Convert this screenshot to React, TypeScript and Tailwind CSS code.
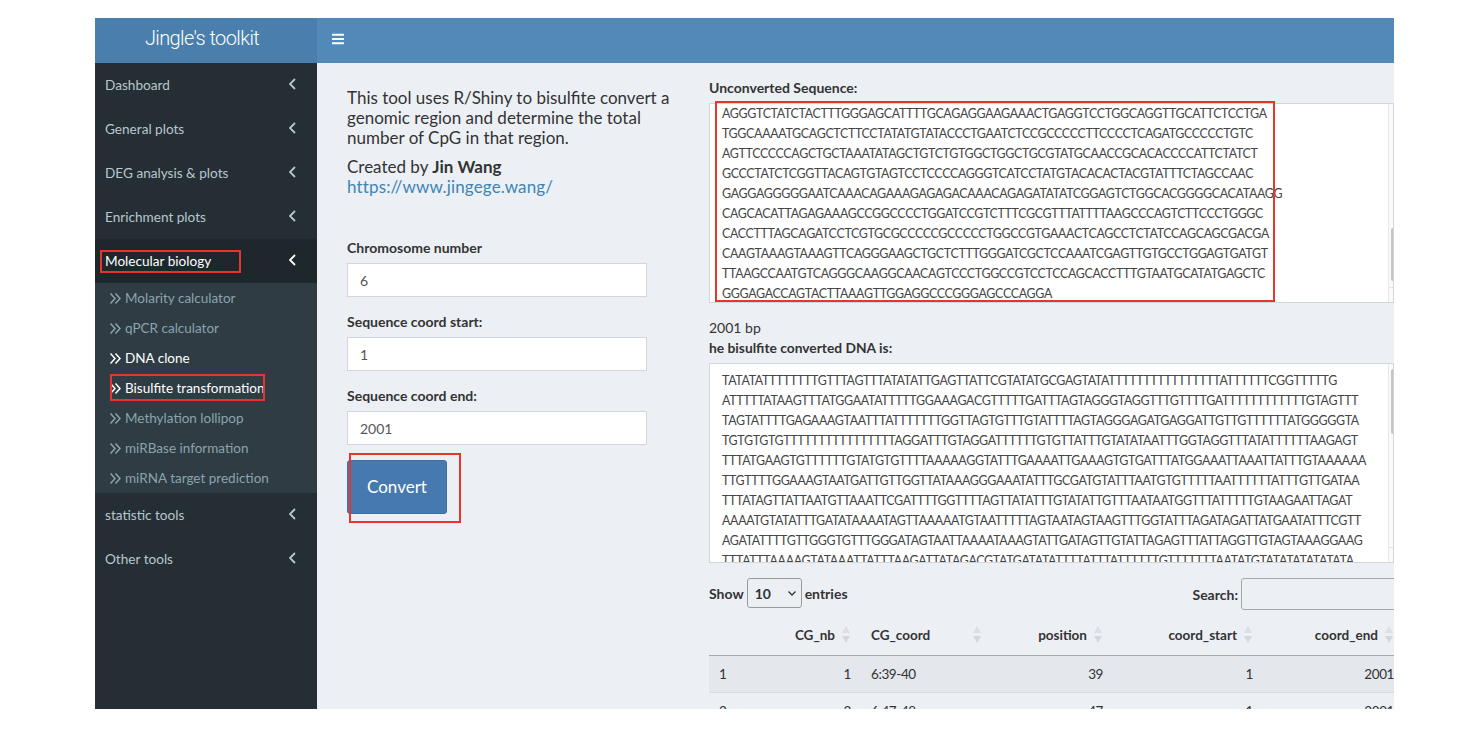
import { FaBars } from 'react-icons/fa';

const topMenu = ['Dashboard', 'General plots', 'DEG analysis & plots', 'Enrichment plots'];
const subMenu = [
  { label: 'Molarity calculator' },
  { label: 'qPCR calculator' },
  { label: 'DNA clone', bright: true },
  { label: 'Bisulfite transformation', bright: true },
  { label: 'Methylation lollipop' },
  { label: 'miRBase information' },
  { label: 'miRNA target prediction' },
];

const unconverted = [
  'AGGGTCTATCTACTTTGGGAGCATTTTGCAGAGGAAGAAACTGAGGTCCTGGCAGGTTGCATTCTCCTGA',
  'TGGCAAAATGCAGCTCTTCCTATATGTATACCCTGAATCTCCGCCCCCTTCCCCTCAGATGCCCCCTGTC',
  'AGTTCCCCCAGCTGCTAAATATAGCTGTCTGTGGCTGGCTGCGTATGCAACCGCACACCCCATTCTATCT',
  'GCCCTATCTCGGTTACAGTGTAGTCCTCCCCAGGGTCATCCTATGTACACACTACGTATTTCTAGCCAAC',
  'GAGGAGGGGGAATCAAACAGAAAGAGAGACAAACAGAGATATATCGGAGTCTGGCACGGGGCACATAAGG',
  'CAGCACATTAGAGAAAGCCGGCCCCTGGATCCGTCTTTCGCGTTTATTTTAAGCCCAGTCTTCCCTGGGC',
  'CACCTTTAGCAGATCCTCGTGCGCCCCCGCCCCCTGGCCGTGAAACTCAGCCTCTATCCAGCAGCGACGA',
  'CAAGTAAAGTAAAGTTCAGGGAAGCTGCTCTTTGGGATCGCTCCAAATCGAGTTGTGCCTGGAGTGATGT',
  'TTAAGCCAATGTCAGGGCAAGGCAACAGTCCCTGGCCGTCCTCCAGCACCTTTGTAATGCATATGAGCTC',
  'GGGAGACCAGTACTTAAAGTTGGAGGCCCGGGAGCCCAGGA',
];

const converted = [
  'TATATATTTTTTTTGTTTAGTTTATATATTGAGTTATTCGTATATGCGAGTATATTTTTTTTTTTTTTTTATTTTTTCGGTTTTTG',
  'ATTTTTATAAGTTTATGGAATATTTTTGGAAAGACGTTTTTGATTTAGTAGGGTAGGTTTGTTTTGATTTTTTTTTTTTGTAGTTT',
  'TAGTATTTTGAGAAAGTAATTTATTTTTTTGGTTAGTGTTTGTATTTTAGTAGGGAGATGAGGATTGTTGTTTTTTATGGGGGTA',
  'TGTGTGTGTTTTTTTTTTTTTTTTAGGATTTGTAGGATTTTTTGTGTTATTTGTATATAATTTGGTAGGTTTATATTTTTTAAGAGT',
  'TTTATGAAGTGTTTTTTGTATGTGTTTTAAAAAGGTATTTGAAAATTGAAAGTGTGATTTATGGAAATTAAATTATTTGTAAAAAA',
  'TTGTTTTGGAAAGTAATGATTGTTGGTTATAAAGGGAAATATTTGCGATGTATTTAATGTGTTTTTAATTTTTTATTTGTTGATAA',
  'TTTATAGTTATTAATGTTAAATTCGATTTTGGTTTTAGTTATATTTGTATATTGTTTAATAATGGTTTATTTTTGTAAGAATTAGAT',
  'AAAATGTATATTTGATATAAAATAGTTAAAAATGTAATTTTTAGTAATAGTAAGTTTGGTATTTAGATAGATTATGAATATTTCGTT',
  'AGATATTTTGTTGGGTGTTTGGGATAGTAATTAAAATAAAGTATTGATAGTTGTATTAGAGTTTATTAGGTTGTAGTAAAGGAAG',
  'TTTATTTAAAAGTATAAATTATTTAAGATTATAGACGTATGATATATTTTATTTATTTTTTGTTTTTTTAATATGTATATATATATATA',
];

const rows = [
  ['1', '1', '6:39-40', '39', '1', '2001'],
  ['2', '2', '6:47-48', '47', '1', '2001'],
];

function SideItem({ label, active }: { label: string; active?: boolean }) {
  return (
    <div className={`h-11 flex items-center justify-between pl-2.5 pr-[21px] text-[13.6px] ${active ? 'bg-[#1e282c] text-white' : 'text-[#b8c7ce]'}`}>
      <span>{label}</span>
      <svg width="7" height="12" viewBox="0 0 7 12" fill="none" stroke="currentColor" strokeWidth="1.8" className="-mt-[3px]">
        <path d="M6 1 L1 6 L6 11" />
      </svg>
    </div>
  );
}

function SortIcon() {
  return (
    <svg className="absolute right-[11px] top-[11px]" width="8" height="18" viewBox="0 0 8 18">
      <path d="M4 0 L8 7 L0 7 Z" fill="#dcdfe3" />
      <path d="M0 10 L8 10 L4 17 Z" fill="#d4d7db" />
    </svg>
  );
}

function SeqBox({ lines, pad, thumb, line }: { lines: string[]; pad: string; thumb: string; line: string }) {
  return (
    <div className={`relative w-[685px] h-[200px] bg-white border border-[#d2d6de] overflow-hidden pl-[12px] ${pad} text-[12.4px] leading-[20px] text-[#444]`}>
      {lines.map(l => (
        <div key={l} className="whitespace-pre tracking-[-0.31px]">{l}</div>
      ))}
      {/* textarea scrollbar */}
      <div className="absolute right-0 top-0 bottom-0 w-[5px] bg-[#fafafa] border-l border-[#e8e8e8]">
        <div className={`absolute left-[2px] right-0 rounded-l-[3px] bg-[#c4c4c4] ${thumb}`} />
        <div className={`absolute left-0 right-0 border-t border-[#e4e4e4] ${line}`} />
      </div>
    </div>
  );
}

export default function App() {
  return (
    <div className="w-[1458px] h-[742px] bg-white pt-[18px] pl-[95px] overflow-hidden font-['Lato','Noto_Sans',sans-serif]">
      <div className="relative w-[1299px] h-[691px] overflow-hidden flex flex-col">
        {/* Header */}
        <header className="h-[45px] flex flex-shrink-0 text-white">
          <div className="w-[222px] bg-[#4a7eac] flex items-center justify-center pr-[8px] pb-[6px] text-[20px] font-light tracking-[-0.6px] font-['Roboto',sans-serif]">
            Jingle's toolkit
          </div>
          <div className="flex-1 bg-[#5189b9] flex items-center pl-[15px]">
            <FaBars className="w-[12px] h-[14px] -mt-[3px]" />
          </div>
        </header>

        <div className="flex flex-1 min-h-0">
          {/* Sidebar */}
          <aside className="w-[222px] flex-shrink-0 bg-[#252e34]">
            {topMenu.map(m => <SideItem key={m} label={m} />)}
            <SideItem label="Molecular biology" active />
            <div className="bg-[#2f3c43] h-[210px]">
              {subMenu.map(s => (
                <div key={s.label} className={`h-[30px] flex items-center pl-[15px] text-[13.5px] ${s.bright ? 'text-white' : 'text-[#8aa4af]'}`}>
                  <svg width="11" height="11" viewBox="0 0 11 11" fill="none" stroke="currentColor" strokeWidth="1.5" className="mr-[4px]">
                    <path d="M0.5 0.5 L5 5.5 L0.5 10.5 M5.5 0.5 L10 5.5 L5.5 10.5" />
                  </svg>
                  <span>{s.label}</span>
                </div>
              ))}
            </div>
            <SideItem label="statistic tools" />
            <SideItem label="Other tools" />
          </aside>

          {/* Main */}
          <main className="flex-1 min-w-0 bg-[#ecf0f5] flex overflow-hidden text-[#333]">
            <section className="w-[392px] flex-shrink-0 pl-[30px] pt-[25px]">
              <p className="w-[330px] text-[17px] leading-[20px]">
                This tool uses R/Shiny to bisulfite convert a genomic region and determine the total number of CpG in that region.
              </p>
              <p className="mt-[9px] text-[17px] leading-[20px]">Created by <b>Jin Wang</b></p>
              <a className="block text-[17px] leading-[20px] tracking-[0.15px] text-[#3c85b6]">https://www.jingege.wang/</a>

              <label className="block mt-[41px] text-[14px] leading-[20px] font-bold">Chromosome number</label>
              <input readOnly value="6" className="mt-[5px] block w-[300px] h-[34px] bg-white border border-[#d2d6de] px-3 text-[14px] text-[#555]" />
              <label className="block mt-[15px] text-[14px] leading-[20px] font-bold">Sequence coord start:</label>
              <input readOnly value="1" className="mt-[5px] block w-[300px] h-[34px] bg-white border border-[#d2d6de] px-3 text-[14px] text-[#555]" />
              <label className="block mt-[15px] text-[14px] leading-[20px] font-bold">Sequence coord end:</label>
              <input readOnly value="2001" className="mt-[5px] block w-[300px] h-[34px] bg-white border border-[#d2d6de] px-3 text-[14px] text-[#555]" />
              <button className="mt-[15px] w-[100px] h-[54px] rounded-[3px] bg-[#4679b0] border border-[#3f6ea3] text-white text-[17px]">Convert</button>
            </section>

            <section className="flex-1 min-w-0 pt-[15px]">
              <div className="text-[14px] leading-[20px] font-bold">Unconverted Sequence:</div>
              <div className="mt-[5px]"><SeqBox lines={unconverted} pad="pt-0" thumb="top-[124px] h-[53px]" line="top-[183px]" /></div>
              <div className="mt-[15px] text-[14px] leading-[20px]">2001 bp</div>
              <div className="text-[13.8px] leading-[20px] font-bold">he bisulfite converted DNA is:</div>
              <div className="mt-[5px]"><SeqBox lines={converted} pad="pt-[7px]" thumb="top-[5px] h-[65px]" line="top-[183px]" /></div>

              <div className="mt-[15px] w-[700px] flex items-start justify-between text-[14px] font-bold">
                <div className="flex items-center h-[30px] gap-[3px]">
                  <span>Show</span>
                  <div className="relative">
                    <select className="block w-[55px] h-[30px] appearance-none bg-transparent border border-[#9a9a9a] rounded-[3px] pl-[7px] text-[14px]">
                      <option>10</option>
                    </select>
                    <svg className="absolute right-[6px] top-[13px]" width="8" height="5" viewBox="0 0 8 5" fill="none" stroke="#333" strokeWidth="1.3">
                      <path d="M0.5 0.5 L4 4 L7.5 0.5" />
                    </svg>
                  </div>
                  <span>entries</span>
                </div>
                <div className="flex items-center h-[32px] gap-[3px]">
                  <span>Search:</span>
                  <input readOnly className="w-[168px] h-[32px] bg-transparent border border-[#a8a8a8] rounded-[3px]" />
                </div>
              </div>

              <table className="mt-[5px] w-[695px] table-fixed border-collapse text-[13.5px]">
                <colgroup>
                  <col className="w-[52px]" /><col className="w-[100px]" /><col className="w-[131px]" />
                  <col className="w-[121px]" /><col className="w-[150px]" /><col className="w-[141px]" />
                </colgroup>
                <thead>
                  <tr className="h-[40px] font-bold border-b border-[#a9a9a9]">
                    <th />
                    <th className="relative text-right pr-[26px]">CG_nb<SortIcon /></th>
                    <th className="relative text-left pl-[10px]">CG_coord<SortIcon /></th>
                    <th className="relative text-right pr-[26px]">position<SortIcon /></th>
                    <th className="relative text-right pr-[26px]">coord_start<SortIcon /></th>
                    <th className="relative text-right pr-[26px]">coord_end<SortIcon /></th>
                  </tr>
                </thead>
                <tbody className="tracking-[-0.4px]">
                  {rows.map((r, i) => (
                    <tr key={r[0]} className={`h-[37px] border-b border-[#dcdcdc] ${i === 0 ? 'bg-[#e4e7ec]' : ''}`}>
                      <td className="pl-[10px] pt-[2px]">{r[0]}</td>
                      <td className="text-right pr-[10px] pt-[2px]">{r[1]}</td>
                      <td className="pl-[10px] pt-[2px]">{r[2]}</td>
                      <td className="text-right pr-[10px] pt-[2px]">{r[3]}</td>
                      <td className="text-right pr-[10px] pt-[2px]">{r[4]}</td>
                      <td className="text-right pr-[10px] pt-[2px]">{r[5]}</td>
                    </tr>
                  ))}
                </tbody>
              </table>
            </section>
          </main>
        </div>

        {/* red annotation boxes drawn over the screenshot */}
        <div className="absolute left-[5px] top-[232px] w-[141px] h-[23px] border-2 border-[#e8352b]" />
        <div className="absolute left-[15px] top-[356px] w-[155px] h-[27px] border-2 border-[#e8352b]" />
        <div className="absolute left-[254px] top-[435px] w-[112px] h-[70px] border-2 border-[#e8352b]" />
        <div className="absolute left-[620px] top-[83px] w-[560px] h-[201px] border-2 border-[#e8352b]" />
      </div>
    </div>
  );
}
